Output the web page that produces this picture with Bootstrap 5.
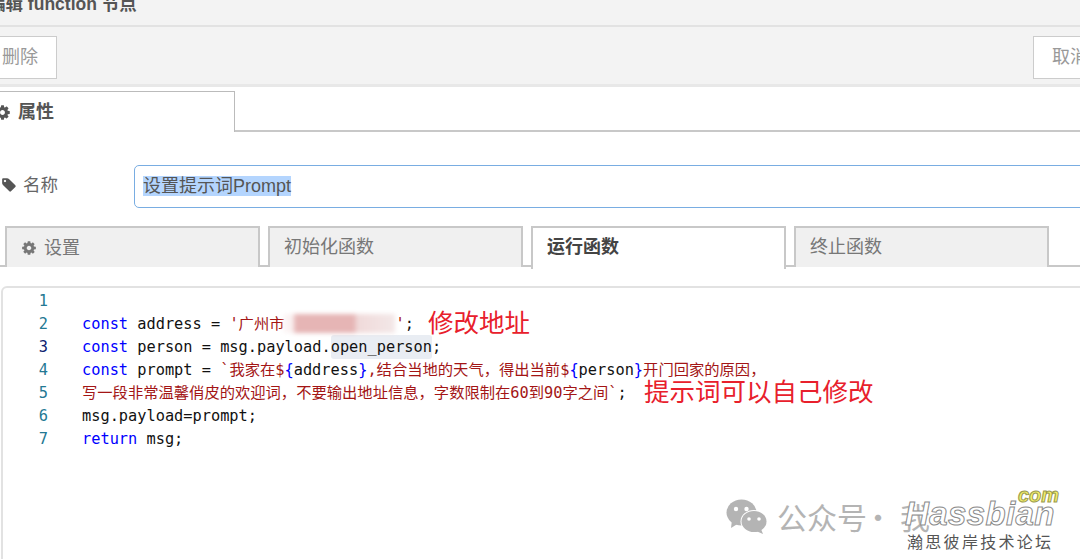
<!DOCTYPE html>
<html lang="zh">
<head>
<meta charset="utf-8">
<title>编辑 function 节点</title>
<link href="https://cdn.jsdelivr.net/npm/bootstrap@5.3.0/dist/css/bootstrap.min.css" rel="stylesheet">
<style>
html,body{height:100%;overflow:hidden;background:#fff}
body{font-family:"Liberation Sans","Noto Sans CJK SC",sans-serif;color:#666}
.stage{width:1080px;height:559px;overflow:hidden;position:relative}
.tray-title{height:27px;background:#f3f3f3;border-bottom:2px solid #e2e2e2;overflow:hidden}
.tray-title span{display:block;margin:-8px 0 0 -12px;font-size:17.5px;line-height:24px;font-weight:700;color:#555;white-space:nowrap}
.tray-bar{height:60px;background:#f3f3f3;border-bottom:3px solid #e8e8e8;padding-top:9px}
.tray-btn{height:43px;background:#fff;border:1px solid #ccc;border-radius:0;color:#999;font-size:18px;line-height:41px;padding:0;white-space:nowrap;overflow:hidden}
.btn-del{width:66px;margin-left:-9px;padding-left:10px;text-align:left}
.btn-cancel{width:80px;margin-right:-33px;padding-left:18px;text-align:left}
.main-tabs{height:44px;margin-top:1px;align-items:flex-end}
.main-tab{width:244px;margin-left:-9px;height:41px;background:#fff;border:1px solid #bbb;border-left:0;border-bottom:0;font-size:18px;font-weight:700;color:#555;line-height:36px;padding-left:3px;gap:7px}
.main-rest{border-bottom:2px solid #c8c8c8;height:2px}
.gear-ico{fill:currentColor;flex:none}
.name-row{margin-top:33px;height:43px;align-items:center}
.name-label{width:134px;font-size:17.5px;line-height:22px;color:#666;gap:6px;padding-left:1px;margin-top:-3px}
.name-label svg{color:#555}
.name-box{flex:1;margin-right:-20px;height:43px;border:1px solid #79ade2;border-radius:5px;font-size:18px;line-height:41px;padding:0 8px;color:#555;min-width:0}
.name-sel{background:#b4d5fe}
.sub-tabs{margin-top:18px;height:41px;border-bottom:2px solid #c8c8c8;padding-left:5px;gap:8px;flex-wrap:nowrap}
.sub-tabs .nav-item{width:255px;flex:none}
.sub-tabs .nav-link{height:41px;background:#f0f0f0;border:2px solid #c8c8c8;border-bottom:0;border-radius:0;color:#777;font-size:18px;line-height:38px;padding:0 0 0 14px;gap:7px;margin:0}
.sub-tabs .nav-link.active{background:#fff;color:#444;font-weight:700;height:43px;border-bottom:0}
.editor{margin:19px -30px -30px 1px;height:320px;border:2px solid #e2e2e2;border-radius:6px;background:#fff;padding-top:2px}
.code-row{height:23px;line-height:23px;font-family:"DejaVu Sans Mono","Noto Sans CJK SC",monospace;font-size:15.3px;white-space:pre;color:#111}
.ln{width:45px;text-align:right;color:#237893;flex:none}
.ln-on{color:#0b216f}
.code-text{margin-left:34px}
.kw{color:#00f}
.st{color:#a31515}
.mark-word{background:#e9edf3;border-radius:3px;padding:3px 0}
.smudge{display:inline-block;width:111px;height:19px;vertical-align:-4px;filter:blur(2px);background:linear-gradient(90deg,#fbf3f3 0 7%,#e6b5b5 11% 63%,#f0dada 66%,#f3e8e8 100%)}
.note{position:absolute;color:#e8202c;font-size:25.5px;line-height:30px;white-space:nowrap;font-family:"Noto Sans CJK SC",sans-serif;font-weight:400}
.note-a{left:428px;top:306px}
.note-b{left:644px;top:375px}
.wm-ico{position:absolute;left:726px;top:499px}
.wm-text{position:absolute;left:777px;top:497px;font-size:30px;line-height:38px;color:#b4b4b4;white-space:nowrap;font-family:"Noto Sans CJK SC",sans-serif}
.wm-dot{display:inline-block;width:30px;margin:0 7px 0 -4px;text-align:center}
.wm-brand{position:absolute;left:905px;top:494px;font:italic 700 33px/40px "Liberation Sans",sans-serif;color:#fff;-webkit-text-stroke:1px #8a8a8a;letter-spacing:.4px;white-space:nowrap}
.wm-com{position:absolute;left:1018px;top:483px;font:italic 700 20px/24px "Liberation Sans",sans-serif;color:#f3ef6a;-webkit-text-stroke:1px #9a9a50;white-space:nowrap}
.wm-sub{position:absolute;left:907px;top:530px;font-size:16px;line-height:22px;letter-spacing:2.3px;color:#555;white-space:nowrap;font-family:"Noto Sans CJK SC",sans-serif}
</style>
</head>
<body>
<div class="stage">
  <div class="tray-title"><span>编辑 function 节点</span></div>
  <div class="tray-bar d-flex justify-content-between align-items-start">
    <button type="button" class="btn tray-btn btn-del">删除</button>
    <button type="button" class="btn tray-btn btn-cancel">取消</button>
  </div>
  <div class="main-tabs d-flex">
    <div class="main-tab d-flex align-items-center flex-none">
      <svg class="gear-ico" width="17" height="17" viewBox="0 0 1792 1792"><path d="M1152 896q0-106-75-181t-181-75-181 75-75 181 75 181 181 75 181-75 75-181zm512-109v222q0 12-8 23t-20 13l-185 28q-19 54-39 91 35 50 107 138 10 12 10 25t-9 23q-27 37-99 108t-94 71q-12 0-26-9l-138-108q-44 23-91 38-16 136-29 186-7 27-36 27h-222q-14 0-24.5-8.5t-11.5-21.5l-28-184q-49-16-90-37l-141 107q-10 9-25 9-14 0-25-11-126-114-165-168-7-10-7-23 0-12 8-23 15-21 51-66.5t54-70.5q-27-50-41-99l-183-27q-13-2-21-12.5t-8-23.5v-222q0-12 8-23t19-13l186-28q14-46 39-92-40-57-107-138-10-12-10-24 0-10 9-23 26-36 98.5-107.5t94.5-71.5q13 0 26 10l138 107q44-23 91-38 16-136 29-186 7-27 36-27h222q14 0 24.5 8.5t11.5 21.5l28 184q49 16 90 37l142-107q9-9 24-9 13 0 25 10 129 119 165 170 7 8 7 22 0 12-8 23-15 21-51 66.5t-54 70.5q26 50 41 98l183 28q13 2 21 12.5t8 23.5z"/></svg>
      <span>属性</span>
    </div>
    <div class="main-rest flex-grow-1"></div>
  </div>
  <div class="name-row d-flex">
    <div class="name-label d-flex align-items-center flex-none">
      <svg class="gear-ico" width="16" height="16" viewBox="0 0 1792 1792"><path d="M576 448q0-53-37.5-90.5t-90.5-37.5-90.5 37.5-37.5 90.5 37.5 90.5 90.5 37.5 90.5-37.5 37.5-90.5zm1067 576q0 53-37 90l-491 492q-39 37-91 37-53 0-90-37l-715-716q-38-37-64.5-101t-26.5-117v-416q0-52 38-90t90-38h416q53 0 117 26.5t102 64.5l715 714q37 39 37 91z"/></svg>
      <span>名称</span>
    </div>
    <div class="name-box"><span class="name-sel">设置提示词Prompt</span></div>
  </div>
  <ul class="nav sub-tabs">
    <li class="nav-item"><a class="nav-link d-flex align-items-center" href="#"><svg class="gear-ico" width="16" height="16" viewBox="0 0 1792 1792"><path d="M1152 896q0-106-75-181t-181-75-181 75-75 181 75 181 181 75 181-75 75-181zm512-109v222q0 12-8 23t-20 13l-185 28q-19 54-39 91 35 50 107 138 10 12 10 25t-9 23q-27 37-99 108t-94 71q-12 0-26-9l-138-108q-44 23-91 38-16 136-29 186-7 27-36 27h-222q-14 0-24.5-8.5t-11.5-21.5l-28-184q-49-16-90-37l-141 107q-10 9-25 9-14 0-25-11-126-114-165-168-7-10-7-23 0-12 8-23 15-21 51-66.5t54-70.5q-27-50-41-99l-183-27q-13-2-21-12.5t-8-23.5v-222q0-12 8-23t19-13l186-28q14-46 39-92-40-57-107-138-10-12-10-24 0-10 9-23 26-36 98.5-107.5t94.5-71.5q13 0 26 10l138 107q44-23 91-38 16-136 29-186 7-27 36-27h222q14 0 24.5 8.5t11.5 21.5l28 184q49 16 90 37l142-107q9-9 24-9 13 0 25 10 129 119 165 170 7 8 7 22 0 12-8 23-15 21-51 66.5t-54 70.5q26 50 41 98l183 28q13 2 21 12.5t8 23.5z"/></svg><span>设置</span></a></li>
    <li class="nav-item"><a class="nav-link" href="#">初始化函数</a></li>
    <li class="nav-item"><a class="nav-link active" href="#">运行函数</a></li>
    <li class="nav-item"><a class="nav-link" href="#">终止函数</a></li>
  </ul>
  <div class="editor">
    <div class="code-row d-flex"><span class="ln">1</span><span class="code-text"></span></div>
    <div class="code-row d-flex"><span class="ln">2</span><span class="code-text"><span class="kw">const</span> address = <span class="st">'广州市<span class="smudge"></span>'</span>;</span></div>
    <div class="code-row d-flex"><span class="ln ln-on">3</span><span class="code-text"><span class="kw">const</span> person = msg.payload.<span class="mark-word">open_person</span>;</span></div>
    <div class="code-row d-flex"><span class="ln">4</span><span class="code-text"><span class="kw">const</span> prompt = <span class="st">`我家在$</span><span class="kw">{</span>address<span class="kw">}</span><span class="st">,结合当地的天气，得出当前$</span><span class="kw">{</span>person<span class="kw">}</span><span class="st">开门回家的原因，</span></span></div>
    <div class="code-row d-flex"><span class="ln">5</span><span class="code-text"><span class="st">写一段非常温馨俏皮的欢迎词，不要输出地址信息，字数限制在60到90字之间`</span>;</span></div>
    <div class="code-row d-flex"><span class="ln">6</span><span class="code-text">msg.payload=prompt;</span></div>
    <div class="code-row d-flex"><span class="ln">7</span><span class="code-text"><span class="kw">return</span> msg;</span></div>
  </div>
  <div class="note note-a">修改地址</div>
  <div class="note note-b">提示词可以自己修改</div>
  <svg class="wm-ico" width="42" height="36" viewBox="0 0 42 36">
    <ellipse cx="15.5" cy="13.5" rx="15" ry="13" fill="#b4b4b4"/>
    <path d="M6 21l-1 8 8-5z" fill="#b4b4b4"/>
    <circle cx="10" cy="10" r="2.2" fill="#fff"/><circle cx="20.5" cy="10" r="2.2" fill="#fff"/>
    <ellipse cx="28" cy="22.5" rx="13.5" ry="11.5" fill="#fff"/>
    <ellipse cx="28" cy="22.5" rx="12.5" ry="10.5" fill="#b4b4b4"/>
    <path d="M35 30l2 5-7-3z" fill="#b4b4b4"/>
    <circle cx="23" cy="20" r="1.8" fill="#fff"/><circle cx="33" cy="20" r="1.8" fill="#fff"/>
  </svg>
  <div class="wm-text">公众号<span class="wm-dot">·</span>我</div>
  <div class="wm-brand">Hassbian</div>
  <div class="wm-com">com</div>
  <div class="wm-sub">瀚思彼岸技术论坛</div>
</div>
<script src="https://cdn.jsdelivr.net/npm/bootstrap@5.3.0/dist/js/bootstrap.bundle.min.js"></script>
</body>
</html>
